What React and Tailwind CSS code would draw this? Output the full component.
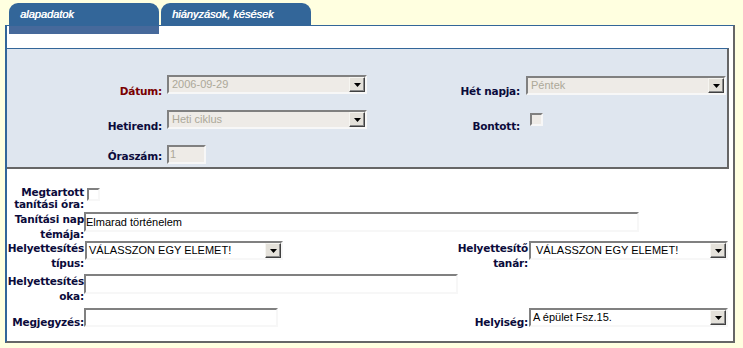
import React from 'react';

const lbl = "font-['DejaVu_Sans',Verdana,sans-serif] font-bold text-[10.5px] tracking-[-0.2px] whitespace-nowrap text-[#0b0b3b] text-right";
const ctl = "font-['Liberation_Sans',Arial,sans-serif] text-[11px]";
const sunken = 'border-2 border-t-[#808080] border-l-[#808080] border-r-[#f7f7f7] border-b-[#f7f7f7]';

function Arrow() {
  return (
    <div className="ml-auto w-[16px] h-[15px] shrink-0 flex items-center justify-center bg-[#e4e1da] border border-t-[#f6f5f1] border-l-[#f6f5f1] border-r-[#404040] border-b-[#404040] shadow-[inset_-1px_-1px_0_#8a8a8a]">
      <svg width="7" height="4" viewBox="0 0 7 4">
        <path d="M0 0h7L3.5 4z" fill="#000" />
      </svg>
    </div>
  );
}

function Select({ value, className = '', disabled, pad = 'pl-[3px]' }) {
  return (
    <div className={`flex items-center h-[19px] ${sunken} ${ctl} ${disabled ? 'bg-[#eeebe7] text-[#aca899]' : 'bg-white text-black'} ${className}`}>
      <span className={`${pad} whitespace-nowrap leading-[15px]`}>{value}</span>
      <Arrow />
    </div>
  );
}

function TextBox({ value = '', className = '', disabled }) {
  return (
    <div className={`flex items-center ${sunken} ${ctl} ${disabled ? 'bg-[#eeebe7] text-[#aca899]' : 'bg-white text-black'} ${className}`}>
      <span className="whitespace-nowrap leading-[15px]">{value}</span>
    </div>
  );
}

function Check({ className = '', disabled }) {
  return <div className={`w-[13px] h-[13px] ${sunken} ${disabled ? 'bg-[#eeebe7]' : 'bg-white'} ${className}`} />;
}

function Tab({ children }) {
  return (
    <div className="w-[150px] h-[22px] rounded-t-[9px] bg-[#336699] pl-[11px] pt-[5px]">
      <span className="font-['Liberation_Sans',Arial,sans-serif] italic text-[11px] leading-[13px] text-white block [text-shadow:0.4px_0_0_#ffffff]">
        {children}
      </span>
    </div>
  );
}

export default function App() {
  return (
    <div className="w-[743px] h-[348px] bg-[#ffffe0] pt-[3px] overflow-hidden">
      {/* tabs */}
      <div className="flex gap-[2px] ml-[9px]">
        <Tab>alapadatok</Tab>
        <Tab>hiányzások, késések</Tab>
      </div>

      {/* frame */}
      <div className="ml-[5px] w-[730px] h-[318px] bg-white border-t border-t-[#336699] border-l-2 border-l-[#336699] border-r-2 border-r-[#666666] border-b-2 border-b-[#666666]">
        <div className="ml-[2px] w-[150px] h-[8px] bg-[#46699b]" />

        {/* upper panel */}
        <div className="mt-[14px] w-[722px] bg-[#dfe6ef] border-t border-t-[#336699] border-r-2 border-r-[#666666] border-b-2 border-b-[#666666] pt-[26px] pb-[3px]">
          <div className="grid grid-cols-[160px_200px_159px_200px] h-[22px]">
            <div className={`${lbl} pr-[5px] pt-[10px] leading-[12px] text-[#7a0000]`}>Dátum:</div>
            <Select value="2006-09-29" disabled className="w-[200px]" />
            <div className={`${lbl} pr-[6px] pt-[10px] leading-[12px]`}>Hét napja:</div>
            <Select value="Péntek" disabled className="w-[200px] mt-[1px]" />
          </div>
          <div className="grid grid-cols-[160px_200px_159px_200px] h-[22px] mt-[13px]">
            <div className={`${lbl} pr-[5px] pt-[10px] leading-[12px]`}>Hetirend:</div>
            <Select value="Heti ciklus" disabled className="w-[200px]" />
            <div className={`${lbl} pr-[6px] pt-[10px] leading-[12px]`}>Bontott:</div>
            <div>
              <Check disabled className="ml-[4px] mt-[3px]" />
            </div>
          </div>
          <div className="grid grid-cols-[160px_200px_159px_200px] h-[19px] mt-[13px]">
            <div className={`${lbl} pr-[5px] pt-[5px] leading-[12px]`}>Óraszám:</div>
            <TextBox value="1" disabled className="w-[39px] h-[19px] pl-[1px]" />
          </div>
        </div>

        {/* lower form */}
        <div className="mt-[17px] flex h-[26px]">
          <div className={`${lbl} w-[77px] leading-[12px]`}>
            Megtartott
            <br />
            tanítási óra:
          </div>
          <Check className="ml-[3px] mt-[2px]" />
        </div>
        <div className="flex h-[29px]">
          <div className={`${lbl} w-[77px] leading-[15px]`}>
            Tanítási nap
            <br />
            témája:
          </div>
          <TextBox value="Elmarad történelem" className="w-[555px] h-[20px]" />
        </div>
        <div className="flex h-[33px]">
          <div className={`${lbl} w-[77px] leading-[15px]`}>
            Helyettesítés
            <br />
            típus:
          </div>
          <Select value="VÁLASSZON EGY ELEMET!" pad="pl-[2px]" className="ml-[1px] w-[198px]" />
          <div className={`${lbl} w-[245px] leading-[15px]`}>
            Helyettesítő
            <br />
            tanár:
          </div>
          <Select value="VÁLASSZON EGY ELEMET!" pad="pl-[5px]" className="ml-[1px] w-[199px]" />
        </div>
        <div className="flex h-[34px]">
          <div className={`${lbl} w-[77px] leading-[15px]`}>
            Helyettesítés
            <br />
            oka:
          </div>
          <TextBox className="w-[374px] h-[20px]" />
        </div>
        <div className="flex h-[20px]">
          <div className={`${lbl} w-[77px] leading-[15px] pt-[7px]`}>Megjegyzés:</div>
          <TextBox className="w-[194px] h-[19px]" />
          <div className={`${lbl} w-[250px] leading-[15px] pt-[7px]`}>Helyiség:</div>
          <Select value="A épület Fsz.15." pad="pl-[2px]" className="ml-[1px] w-[199px]" />
        </div>
      </div>
    </div>
  );
}
